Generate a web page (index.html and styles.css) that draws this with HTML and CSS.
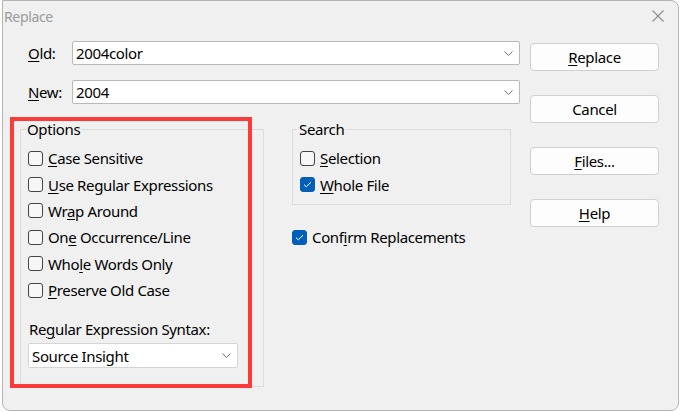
FILE: index.html
```html
<!DOCTYPE html>
<html>
<head>
<meta charset="utf-8">
<link rel="stylesheet" href="styles.css">
</head>
<body>
<div class="window">
  <div class="titlebar">
    <span class="title">Replace</span>
    <svg class="close" width="12" height="12" viewBox="0 0 12 12"><path d="M0.5 0.5L11.5 11.5M11.5 0.5L0.5 11.5" stroke="#8c8c8c" stroke-width="1.1" fill="none"/></svg>
  </div>
  <div class="content">
    <div class="left">
      <div class="field">
        <label class="flabel"><u>O</u>ld:</label>
        <div class="combo"><span>2004color</span><svg class="chev" width="9" height="5" viewBox="0 0 9 5"><path d="M0.5 0.5L4.5 4.5L8.5 0.5" stroke="#707070" fill="none"/></svg></div>
      </div>
      <div class="field second">
        <label class="flabel"><u>N</u>ew:</label>
        <div class="combo"><span>2004</span><svg class="chev" width="9" height="5" viewBox="0 0 9 5"><path d="M0.5 0.5L4.5 4.5L8.5 0.5" stroke="#707070" fill="none"/></svg></div>
      </div>
      <div class="groups">
        <fieldset class="group options">
          <legend>Options</legend>
          <div class="check"><span class="box"></span><span><u>C</u>ase Sensitive</span></div>
          <div class="check"><span class="box"></span><span><u>U</u>se Regular Expressions</span></div>
          <div class="check"><span class="box"></span><span>Wr<u>a</u>p Around</span></div>
          <div class="check"><span class="box"></span><span>On<u>e</u> Occurrence/Line</span></div>
          <div class="check"><span class="box"></span><span>Who<u>l</u>e Words Only</span></div>
          <div class="check"><span class="box"></span><span><u>P</u>reserve Old Case</span></div>
          <div class="syntax-label">Re<u>g</u>ular Expression Syntax:</div>
          <div class="select"><span>Source Insight</span><svg class="chev" width="9" height="5" viewBox="0 0 9 5"><path d="M0.5 0.5L4.5 4.5L8.5 0.5" stroke="#707070" fill="none"/></svg></div>
        </fieldset>
        <div class="right-groups">
          <fieldset class="group search">
            <legend>Search</legend>
            <div class="check"><span class="box"></span><span><u>S</u>election</span></div>
            <div class="check"><span class="box on"><svg width="15" height="15" viewBox="0 0 15 15"><path d="M4 7.6L6.3 9.8L11 5.2" stroke="#fff" stroke-width="1" fill="none"/></svg></span><span><u>W</u>hole File</span></div>
          </fieldset>
          <div class="check confirm"><span class="box on"><svg width="15" height="15" viewBox="0 0 15 15"><path d="M4 7.6L6.3 9.8L11 5.2" stroke="#fff" stroke-width="1" fill="none"/></svg></span><span>Conf<u>i</u>rm Replacements</span></div>
        </div>
      </div>
    </div>
    <div class="buttons">
      <button class="btn"><u>R</u>eplace</button>
      <button class="btn">Cancel</button>
      <button class="btn"><u>F</u>iles...</button>
      <button class="btn"><u>H</u>elp</button>
    </div>
  </div>
  <div class="highlight"></div>
</div>
</body>
</html>
```

FILE: styles.css
```css
html, body {
  margin: 0;
  padding: 0;
  background: #ffffff;
}
body {
  font-family: "Noto Sans", "Open Sans", sans-serif;
  font-size: 15px;
  letter-spacing: -0.35px;
  color: #000;
}
u {
  text-decoration-thickness: 1px;
  text-underline-offset: 2px;
}
.window {
  position: relative;
  box-sizing: border-box;
  width: 677px;
  height: 411px;
  margin-left: 2px;
  background: #f0f0f0;
  border: 1px solid #b4b4b4;
  border-radius: 0 8px 8px 8px;
}
.titlebar {
  height: 30px;
  display: flex;
  align-items: center;
  justify-content: space-between;
  padding: 0 14px 0 1px;
}
.title {
  font-size: 14px;
  color: #9a9a9a;
}
.content {
  display: flex;
  padding-left: 17px;
  gap: 10px;
}
.left {
  width: 500px;
  display: flex;
  flex-direction: column;
}
.field {
  display: flex;
  align-items: center;
  margin-top: 10px;
}
.field.second {
  margin-top: 15px;
}
.flabel {
  width: 44px;
  margin-left: 8px;
  line-height: 20px;
}
.combo, .select {
  box-sizing: border-box;
  display: flex;
  align-items: center;
  justify-content: space-between;
  background: #fff;
  border: 1px solid #b9b9b9;
  border-radius: 2px;
  height: 24px;
  padding: 0 6px 0 3px;
}
.combo {
  width: 448px;
}
.chev {
  display: block;
}
.groups {
  display: flex;
  gap: 28px;
  margin-top: 15px;
}
.group {
  margin: 0;
  border: 1px solid #dcdcdc;
  padding: 0 0 0 7px;
  box-sizing: border-box;
}
.group legend {
  padding: 0 1px;
  margin-left: -2px;
  line-height: 20px;
}
.options {
  width: 244px;
  height: 268px;
}
.right-groups {
  display: flex;
  flex-direction: column;
}
.search {
  width: 219px;
  height: 86px;
}
.check {
  display: flex;
  align-items: center;
  gap: 5px;
  height: 26.4px;
}
.options .check:first-of-type,
.search .check:first-of-type {
  margin-top: 6px;
}
.box {
  box-sizing: border-box;
  width: 15px;
  height: 15px;
  border: 1px solid #444;
  border-radius: 3px;
  background: #f7f7f7;
  flex: none;
}
.box.on {
  background: #005fb8;
  border-color: #005fb8;
}
.box.on svg {
  display: block;
  margin: -1px;
}
.confirm {
  margin-top: 19px;
}
.syntax-label {
  margin-top: 16px;
  margin-left: 1px;
  line-height: 20px;
}
.select {
  width: 210px;
  height: 25px;
  margin-top: 4px;
  border-color: #d4d4d4;
}
.buttons {
  display: flex;
  flex-direction: column;
  gap: 24px;
  padding-top: 12px;
}
.btn {
  box-sizing: border-box;
  width: 129px;
  height: 28px;
  font-family: inherit;
  font-size: 15px;
  letter-spacing: inherit;
  color: #000;
  background: #fdfdfd;
  border: 1px solid #d0d0d0;
  border-radius: 4px;
  padding: 0;
}
.highlight {
  position: absolute;
  left: 7px;
  top: 116px;
  width: 242px;
  height: 271px;
  box-sizing: border-box;
  border: 4px solid #fb3a3a;
}
```
